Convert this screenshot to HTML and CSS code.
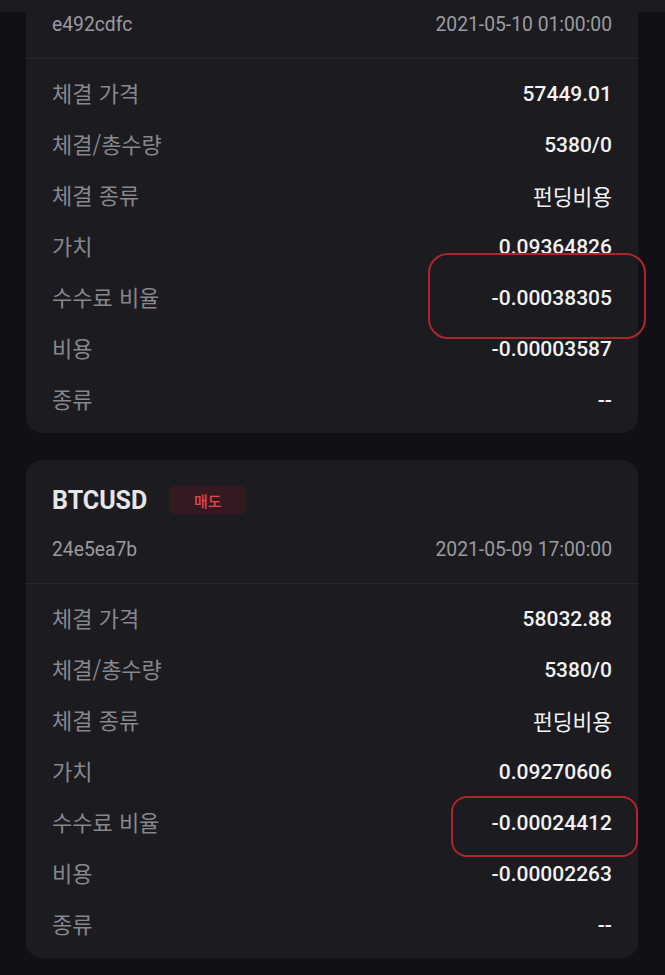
FILE: index.html
```html
<!DOCTYPE html>
<html lang="ko">
<head>
    <meta charset="UTF-8">
    <meta name="viewport" content="width=device-width, initial-scale=1.0">
    <title>펀딩비용 내역</title>
    <link rel="stylesheet" href="styles.css">
</head>
<body>
    <div class="page">
        <div class="topbar"></div>
        <div class="list">
            <div class="card first">
                <div class="card-head">
                    <div class="meta-row">
                        <span>e492cdfc</span>
                        <span>2021-05-10 01:00:00</span>
                    </div>
                </div>
                <div class="card-body">
                    <div class="row"><span class="label">체결 가격</span><span class="value">57449.01</span></div>
                    <div class="row"><span class="label">체결/총수량</span><span class="value">5380/0</span></div>
                    <div class="row"><span class="label">체결 종류</span><span class="value text">펀딩비용</span></div>
                    <div class="row"><span class="label">가치</span><span class="value">0.09364826</span></div>
                    <div class="row"><span class="label">수수료 비율</span><span class="value">-0.00038305</span></div>
                    <div class="row"><span class="label">비용</span><span class="value">-0.00003587</span></div>
                    <div class="row"><span class="label">종류</span><span class="value">--</span></div>
                </div>
            </div>

            <div class="card">
                <div class="card-head">
                    <div class="title-row">
                        <span class="symbol">BTCUSD</span>
                        <span class="badge">매도</span>
                    </div>
                    <div class="meta-row">
                        <span>24e5ea7b</span>
                        <span>2021-05-09 17:00:00</span>
                    </div>
                </div>
                <div class="card-body">
                    <div class="row"><span class="label">체결 가격</span><span class="value">58032.88</span></div>
                    <div class="row"><span class="label">체결/총수량</span><span class="value">5380/0</span></div>
                    <div class="row"><span class="label">체결 종류</span><span class="value text">펀딩비용</span></div>
                    <div class="row"><span class="label">가치</span><span class="value">0.09270606</span></div>
                    <div class="row"><span class="label">수수료 비율</span><span class="value">-0.00024412</span></div>
                    <div class="row"><span class="label">비용</span><span class="value">-0.00002263</span></div>
                    <div class="row"><span class="label">종류</span><span class="value">--</span></div>
                </div>
            </div>
        </div>

        <!-- hand-drawn highlight marks over the fee rate values -->
        <div class="mark mark-one"></div>
        <div class="mark mark-two"></div>
    </div>
</body>
</html>
```

FILE: styles.css
```css
body {
    margin: 0;
    padding: 0;
    background: #111115;
    font-family: "Noto Sans CJK KR", sans-serif;
}
.page {
    position: relative;
    height: 975px;
    overflow: hidden;
}
.topbar {
    height: 12px;
    background: #1b1b20;
}
.list {
    padding: 0 27px 0 26px;
    overflow: hidden;
    height: 963px;
}
.card {
    background: #1b1b20;
    border-radius: 16px;
    margin-bottom: 27px;
}
.card.first {
    margin-top: -45px;
}
.card-head {
    padding: 24px 26px 21px;
    border-bottom: 1px solid #27272d;
}
.title-row {
    display: flex;
    align-items: center;
    gap: 22px;
    height: 32px;
}
.symbol {
    font-family: Roboto, sans-serif;
    font-weight: 700;
    font-size: 25px;
    color: #e6e6e8;
}
.badge {
    display: inline-flex;
    align-items: center;
    justify-content: center;
    width: 77px;
    height: 28px;
    border-radius: 5px;
    background: #341a20;
    color: #e4464f;
    font-size: 15px;
    font-weight: 500;
}
.meta-row {
    display: flex;
    justify-content: space-between;
    margin-top: 22px;
    line-height: 24px;
    font-family: Roboto, sans-serif;
    font-size: 19.3px;
    color: #9b9ba1;
}
.card-body {
    padding: 9px 26px 8px;
}
.row {
    display: flex;
    justify-content: space-between;
    align-items: center;
    height: 51px;
}
.label {
    font-size: 22px;
    line-height: 26px;
    margin-top: -3px;
    color: #87878e;
}
.value {
    font-family: Roboto, "Noto Sans CJK KR", sans-serif;
    font-weight: 500;
    font-size: 21px;
    color: #f2f2f3;
}
.value.text {
    font-family: "Noto Sans CJK KR", sans-serif;
    font-weight: 400;
    font-size: 21.5px;
}
.mark {
    position: absolute;
    border: 2px solid #b1242d;
    box-sizing: border-box;
}
.mark-one {
    left: 428px;
    top: 253px;
    width: 218px;
    height: 86px;
    border-radius: 20px;
}
.mark-two {
    left: 451px;
    top: 796px;
    width: 187px;
    height: 61px;
    border-radius: 16px;
}
```
